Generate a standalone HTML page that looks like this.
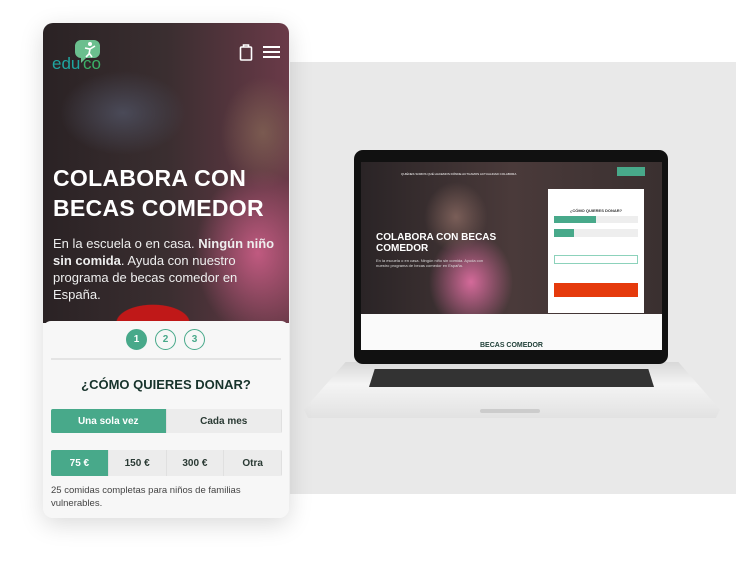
<!DOCTYPE html>
<html><head><meta charset="utf-8"><style>
*{margin:0;padding:0;box-sizing:border-box}
body{width:755px;height:566px;background:#fff;position:relative;overflow:hidden;font-family:"Liberation Sans",sans-serif}
.panel{position:absolute;left:290px;top:62px;width:446px;height:432px;background:#e9e9e9}
.phone{position:absolute;left:43px;top:23px;width:246px;height:495px;border-radius:10px;overflow:hidden;background:#f7f7f7;box-shadow:0 6px 24px rgba(0,0,0,.15)}
.hero{position:absolute;left:0;top:0;width:246px;height:300px;background:
radial-gradient(ellipse 60px 30px at 110px 300px,#c01818 60%,transparent 62%),
radial-gradient(ellipse 90px 120px at 215px 230px,#c05a80,transparent 70%),
radial-gradient(ellipse 60px 80px at 220px 110px,#7a5a50,transparent 70%),
radial-gradient(ellipse 90px 60px at 80px 90px,#4a4a58,transparent 70%),
linear-gradient(90deg,#2a2224 0%,#3a2e30 50%,#6a3a48 100%)}
.logo{position:absolute;left:9px;top:15px}
h1{position:absolute;left:10px;top:140px;color:#fff;font-size:23px;line-height:30px;font-weight:bold;letter-spacing:.3px}
.sub{position:absolute;left:10px;top:212px;width:230px;color:#eee;font-size:13px;line-height:17px}
.card{position:absolute;left:0;top:298px;width:246px;height:197px;background:#f7f7f7;border-radius:8px 8px 0 0}
.steps{position:absolute;top:8px;left:83px;display:flex;gap:8px}
.steps span{width:21px;height:21px;border-radius:50%;border:1.5px solid #48a98a;color:#48a98a;font-size:10px;font-weight:bold;display:flex;align-items:center;justify-content:center}
.steps span.a{background:#48a98a;color:#fff}
.hr{position:absolute;left:8px;top:37px;width:230px;height:2px;background:#e4e4e4}
.q{position:absolute;top:56px;width:100%;text-align:center;font-weight:bold;font-size:13px;color:#17332b}
.row{position:absolute;left:8px;width:231px;height:24px;display:flex;background:#ececec;border-radius:2px;overflow:hidden}
.row div{flex:1;display:flex;align-items:center;justify-content:center;font-size:10px;font-weight:bold;color:#2a3a34;border-right:1px solid #e0e0e0}
.row div.a{background:#48a98a;color:#fff}
.note{position:absolute;left:8px;top:163px;font-size:9.5px;line-height:13px;color:#444;width:220px}
.bezel{position:absolute;left:354px;top:150px;width:314px;height:214px;background:#111;border-radius:9px}
.scr{position:absolute;left:361px;top:162px;width:301px;height:188px;background:#fff;overflow:hidden}
.shero{position:absolute;left:0;top:0;width:301px;height:152px;background:
radial-gradient(ellipse 45px 50px at 95px 55px,#7a5e58,transparent 70%),
radial-gradient(ellipse 60px 70px at 110px 120px,#d46a9a,transparent 70%),
linear-gradient(90deg,#2a2426,#4a3a3a 50%,#3a3030)}
.base{position:absolute;left:304px;top:362px;width:416px;height:56px;background:linear-gradient(#d8d8d8,#f4f4f4 40%,#e2e2e2);clip-path:polygon(10% 0,90% 0,100% 85%,99% 100%,1% 100%,0 85%)}
.kb{position:absolute;left:369px;top:369px;width:285px;height:18px;background:#333;clip-path:polygon(2% 0,98% 0,100% 100%,0 100%)}
.form{position:absolute;left:187px;top:27px;width:96px;height:124px;background:#fff}
</style></head><body>
<div class="panel"></div>
<div class="base"></div><div class="kb"></div>
<div style="position:absolute;left:480px;top:409px;width:60px;height:4px;background:#ccc;border-radius:2px"></div>
<div class="bezel"></div>
<div class="scr">
 <div class="shero"></div>
 <div style="position:absolute;left:40px;top:10px;color:#fff;font-size:3px">QUIÉNES SOMOS QUÉ HACEMOS DÓNDE ACTUAMOS ACTUALIDAD COLABORA</div>
 <div style="position:absolute;left:256px;top:5px;width:28px;height:9px;background:#48a98a"></div>
 <div style="position:absolute;left:15px;top:70px;color:#fff;font-size:10px;font-weight:bold;line-height:11px">COLABORA CON BECAS<br>COMEDOR</div>
 <div style="position:absolute;left:15px;top:96px;color:#ddd;font-size:4px;width:110px">En la escuela o en casa. Ningún niño sin comida. Ayuda con nuestro programa de becas comedor en España.</div>
 <div class="form">
  <div style="margin:19px 5px 0;text-align:center;font-size:4px;font-weight:bold;color:#333">¿CÓMO QUIERES DONAR?</div>
  <div style="position:absolute;left:6px;top:27px;width:42px;height:7px;background:#48a98a"></div>
  <div style="position:absolute;left:48px;top:27px;width:42px;height:7px;background:#eee"></div>
  <div style="position:absolute;left:6px;top:40px;width:20px;height:8px;background:#48a98a"></div>
  <div style="position:absolute;left:26px;top:40px;width:64px;height:8px;background:#eee"></div>
  <div style="position:absolute;left:6px;top:66px;width:84px;height:9px;border:1px solid #8cd2bb"></div>
  <div style="position:absolute;left:6px;top:94px;width:84px;height:14px;background:#e53a0c"></div>
 </div>
 <div style="position:absolute;left:0;top:152px;width:301px;height:36px;background:#fafafa"></div>
 <div style="position:absolute;left:0;top:180px;width:301px;text-align:center;font-size:7px;font-weight:bold;color:#1e3e36">BECAS COMEDOR</div>
</div>
<div class="phone">
 <div class="hero"></div>
 <svg class="logo" width="56" height="34" viewBox="0 0 56 34">
  <path d="M28 2h14a6 6 0 0 1 6 6v6a6 6 0 0 1-6 6h-8l-5 5v-5a6 6 0 0 1-6-6v-6a6 6 0 0 1 6-6z" fill="#6bbf8e"/>
  <circle cx="38" cy="6" r="2" fill="#fff"/><path d="M33 10l5 1 5-3M38 11l-1 5-3 3M37 15l3 4" stroke="#fff" stroke-width="1.6" fill="none"/>
  <text x="0" y="31" font-family="Liberation Sans" font-size="17" fill="#1fa5a0">edu</text>
  <text x="31" y="31" font-family="Liberation Sans" font-size="17" fill="#3bb067">co</text>
 </svg>
 <svg style="position:absolute;left:196px;top:20px" width="14" height="18" viewBox="0 0 14 18"><rect x="1.5" y="4" width="11" height="13" rx="1" fill="none" stroke="#fff" stroke-width="1.6"/><path d="M4.5 4V2h5v2" stroke="#fff" stroke-width="1.6" fill="none"/></svg>
 <svg style="position:absolute;left:220px;top:22px" width="17" height="14"><path d="M0 2h17M0 7h17M0 12h17" stroke="#fff" stroke-width="2"/></svg>
 <h1>COLABORA CON<br>BECAS COMEDOR</h1>
 <div class="sub">En la escuela o en casa. <b>Ningún niño sin comida</b>. Ayuda con nuestro programa de becas comedor en España.</div>
 <div class="card">
  <div class="steps"><span class="a">1</span><span>2</span><span>3</span></div>
  <div class="hr"></div>
  <div class="q">¿CÓMO QUIERES DONAR?</div>
  <div class="row" style="top:88px"><div class="a">Una sola vez</div><div>Cada mes</div></div>
  <div class="row" style="top:129px;height:26px"><div class="a">75 €</div><div>150 €</div><div>300 €</div><div>Otra</div></div>
  <div class="note">25 comidas completas para niños de familias vulnerables.</div>
 </div>
</div>
</body></html>
